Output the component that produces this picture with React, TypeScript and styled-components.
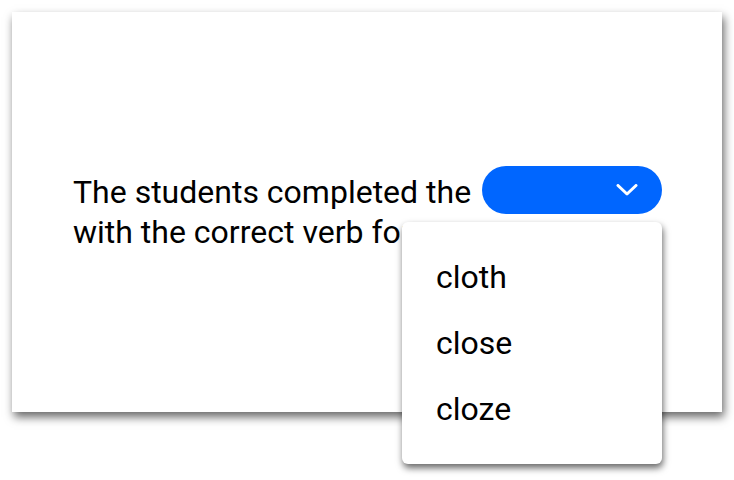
import React from 'react';
import styled, { createGlobalStyle } from 'styled-components';

const GlobalStyle = createGlobalStyle`
  html, body {
    margin: 0;
    padding: 0;
    background: #ffffff;
  }
  body {
    font-family: Roboto, "Liberation Sans", sans-serif;
  }
`;

const Page = styled.div`
  min-height: 480px;
  box-sizing: border-box;
  padding: 12px;
`;

const Card = styled.div`
  height: 400px;
  background: #fff;
  box-shadow: 2px 5px 9px rgba(0, 0, 0, 0.6);
  display: flex;
  align-items: center;
  padding: 0 40px 0 61px;
  box-sizing: border-box;
`;

const Sentence = styled.p`
  margin: 0;
  font-size: 32px;
  line-height: 40px;
  color: #000;
  white-space: nowrap;
`;

const Blank = styled.span`
  position: relative;
  top: -5px;
  display: inline-block;
  vertical-align: middle;
  margin: -8px 0 -8px 3px;
`;

const Pill = styled.button`
  width: 180px;
  height: 48px;
  border: none;
  border-radius: 24px;
  background: #0066ff;
  display: flex;
  align-items: center;
  justify-content: flex-end;
  padding: 0 24px 0 0;
  cursor: pointer;
`;

const Menu = styled.ul`
  position: absolute;
  top: 56px;
  right: 0;
  width: 260px;
  margin: 0;
  padding: 22px 0;
  list-style: none;
  background: #fff;
  border-radius: 6px;
  box-shadow: 1px 4px 7px rgba(0, 0, 0, 0.6);
  z-index: 2;
`;

const Option = styled.li`
  height: 66px;
  display: flex;
  align-items: center;
  padding-left: 34px;
  font-size: 32px;
  line-height: 1;
  color: #000;
`;

const Chevron = () => (
  <svg width="22" height="12" viewBox="0 0 22 12" fill="none">
    <path d="M2 1.5 L11 10 L20 1.5" stroke="#fff" strokeWidth="3" strokeLinecap="round" strokeLinejoin="round" />
  </svg>
);

export default function App() {
  const options = ['cloth', 'close', 'cloze'];
  return (
    <>
      <GlobalStyle />
      <Page>
        <Card>
          <Sentence>
            The students completed the{' '}
            <Blank>
              <Pill aria-label="choose word">
                <Chevron />
              </Pill>
              <Menu>
                {options.map((o) => (
                  <Option key={o}>{o}</Option>
                ))}
              </Menu>
            </Blank>
            <br />
            with the correct verb form.
          </Sentence>
        </Card>
      </Page>
    </>
  );
}
